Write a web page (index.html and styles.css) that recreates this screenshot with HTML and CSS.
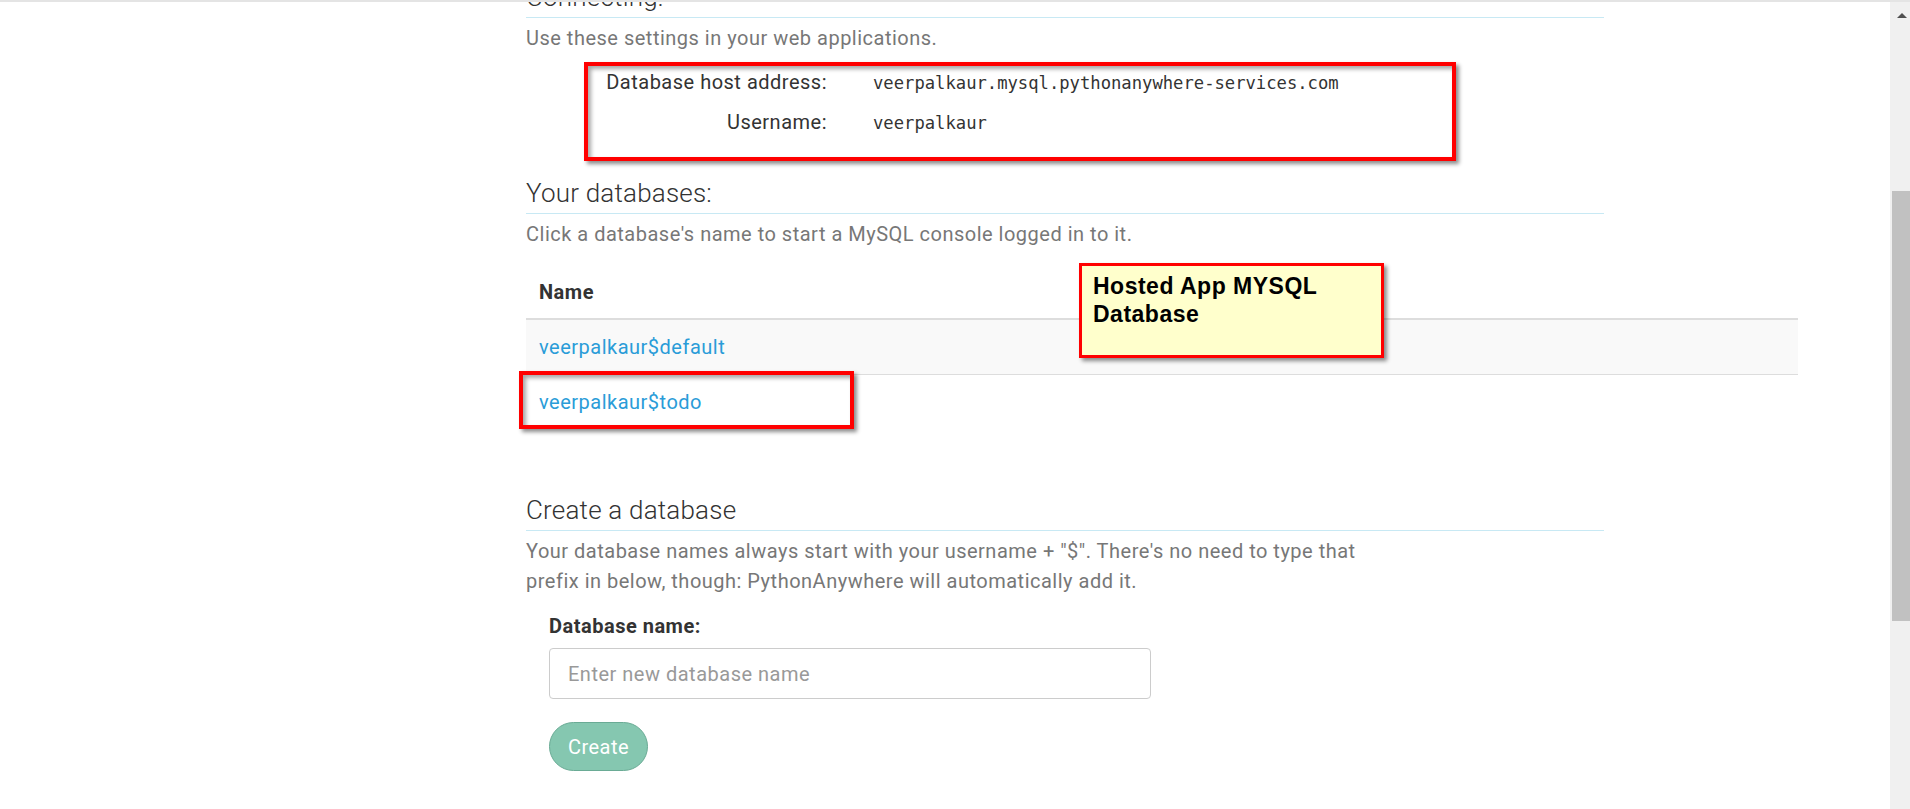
FILE: index.html
```html
<!DOCTYPE html>
<html lang="en">
<head>
<meta charset="utf-8">
<title>Databases</title>
<link rel="stylesheet" href="styles.css">
</head>
<body>
<div class="page">
  <main class="content">
    <h3 class="section-title first">Connecting:</h3>
    <p class="help">Use these settings in your web applications.</p>
    <div class="highlight-box">
      <dl class="settings">
        <dt>Database host address:</dt>
        <dd>veerpalkaur.mysql.pythonanywhere-services.com</dd>
        <dt>Username:</dt>
        <dd>veerpalkaur</dd>
      </dl>
    </div>

    <section class="databases">
      <h3 class="section-title">Your databases:</h3>
      <p class="help">Click a database's name to start a MySQL console logged in to it.</p>
      <table class="db-table">
        <thead>
          <tr><th>Name</th></tr>
        </thead>
        <tbody>
          <tr class="striped"><td><a href="#">veerpalkaur$default</a></td></tr>
          <tr><td><a href="#">veerpalkaur$todo</a></td></tr>
        </tbody>
      </table>
      <div class="callout">Hosted App MYSQL<br>Database</div>
      <div class="mark-box"></div>
    </section>

    <section class="create">
      <h3 class="section-title">Create a database</h3>
      <p class="help wrap">Your database names always start with your username + "$". There's no need to type that prefix in below, though: PythonAnywhere will automatically add it.</p>
      <form class="create-form">
        <label class="field-label" for="dbname">Database name:</label>
        <input class="field-input" id="dbname" type="text" placeholder="Enter new database name">
        <button class="btn-create" type="button">Create</button>
      </form>
    </section>
  </main>
</div>
<div class="scrollbar">
  <span class="scroll-arrow"></span>
  <span class="scroll-thumb"></span>
</div>
</body>
</html>
```

FILE: styles.css
```css
html, body {
  margin: 0;
  padding: 0;
}

body {
  height: 809px;
  box-sizing: border-box;
  border-top: 2px solid #e4e4e4;
  overflow: hidden;
  display: flex;
  background: #fff;
  font-family: Roboto, "Liberation Sans", Arial, sans-serif;
  font-size: 20px;
  letter-spacing: 0.5px;
  color: #333;
}

.page {
  flex: 1;
  overflow: hidden;
  background: #fff;
}

.content {
  margin-left: 526px;
  width: 1272px;
}

.section-title {
  width: 1078px;
  margin: 0;
  font-size: 26px;
  font-weight: 300;
  letter-spacing: 0.2px;
  line-height: 28px;
  padding-bottom: 6px;
  border-bottom: 1px solid #c8e9f4;
  color: #333;
}

.section-title.first {
  margin-top: -19px;
}

.help {
  margin: 5px 0 0;
  line-height: 30px;
  color: #777;
}

.help.wrap {
  max-width: 870px;
}

/* annotation box around connection settings */
.highlight-box {
  margin: 9px 0 0 58px;
  width: 872px;
  height: 99px;
  box-sizing: border-box;
  border: 4px solid #ff0000;
  padding: 1px 0 0;
  box-shadow: 3px 3px 4px rgba(0, 0, 0, 0.45), inset 3px 3px 4px rgba(0, 0, 0, 0.35);
}

.settings {
  margin: 0;
  display: grid;
  grid-template-columns: 239px auto;
  column-gap: 46px;
  row-gap: 9px;
  align-items: baseline;
  line-height: 30px;
}

.settings dt {
  text-align: right;
  color: #333;
}

.settings dd {
  margin: 0;
  font-family: "DejaVu Sans Mono", "Liberation Mono", monospace;
  font-size: 17.2px;
  letter-spacing: 0;
  color: #333;
}

.databases {
  position: relative;
  margin-top: 18px;
}

.db-table {
  margin-top: 16px;
  width: 1272px;
  border-collapse: collapse;
  border-spacing: 0;
}

.db-table th {
  text-align: left;
  font-weight: 700;
  color: #333;
  line-height: 30px;
  padding: 12px 13px 11px;
  border-bottom: 2px solid #ddd;
}

.db-table td {
  line-height: 30px;
  padding: 12px 13px;
  border-top: 1px solid #ddd;
}

.db-table tr.striped td {
  background: #f9f9f9;
}

.db-table a {
  color: #2a9cd8;
  text-decoration: none;
}

/* yellow annotation callout */
.callout {
  position: absolute;
  left: 553px;
  top: 84px;
  width: 305px;
  height: 95px;
  box-sizing: border-box;
  border: 3px solid #ff0000;
  background: #ffffcc;
  padding: 6px 11px 0;
  font-family: "Liberation Sans", Arial, sans-serif;
  font-weight: 700;
  font-size: 23px;
  letter-spacing: 0.5px;
  line-height: 28px;
  color: #000;
  box-shadow: 3px 3px 4px rgba(0, 0, 0, 0.45);
}

/* red annotation around the todo database */
.mark-box {
  position: absolute;
  left: -7px;
  top: 192px;
  width: 335px;
  height: 58px;
  box-sizing: border-box;
  border: 4px solid #ff0000;
  box-shadow: 3px 3px 4px rgba(0, 0, 0, 0.45), inset 3px 3px 4px rgba(0, 0, 0, 0.35);
  pointer-events: none;
}

.create {
  margin-top: 67px;
}

.create-form {
  margin: 0;
  padding-left: 23px;
}

.field-label {
  display: block;
  margin-top: 15px;
  font-weight: 700;
  line-height: 30px;
  color: #333;
}

.field-input {
  display: block;
  margin-top: 7px;
  width: 602px;
  height: 51px;
  box-sizing: border-box;
  border: 1px solid #ccc;
  border-radius: 4px;
  padding: 0 18px;
  font-family: Roboto, "Liberation Sans", Arial, sans-serif;
  font-size: 20px;
  letter-spacing: 0.5px;
  color: #555;
  background: #fff;
}

.field-input::placeholder {
  color: #999;
}

.btn-create {
  display: block;
  margin-top: 23px;
  width: 99px;
  height: 49px;
  border-radius: 25px;
  border: 1px solid #6aab95;
  background: #85c7b0;
  color: #fff;
  font-family: Roboto, "Liberation Sans", Arial, sans-serif;
  font-size: 20px;
  letter-spacing: 0.5px;
  padding: 0;
}

/* fake browser scrollbar */
.scrollbar {
  width: 20px;
  flex: 0 0 20px;
  background: #f0f0f0;
  display: flex;
  flex-direction: column;
}

.scroll-arrow {
  display: block;
  width: 0;
  height: 0;
  margin: 11px 0 0 7px;
  border-left: 5px solid transparent;
  border-right: 5px solid transparent;
  border-bottom: 5px solid #505050;
}

.scroll-thumb {
  display: block;
  margin: 173px 0 0 2px;
  width: 18px;
  height: 430px;
  background: #c1c1c1;
}
```
